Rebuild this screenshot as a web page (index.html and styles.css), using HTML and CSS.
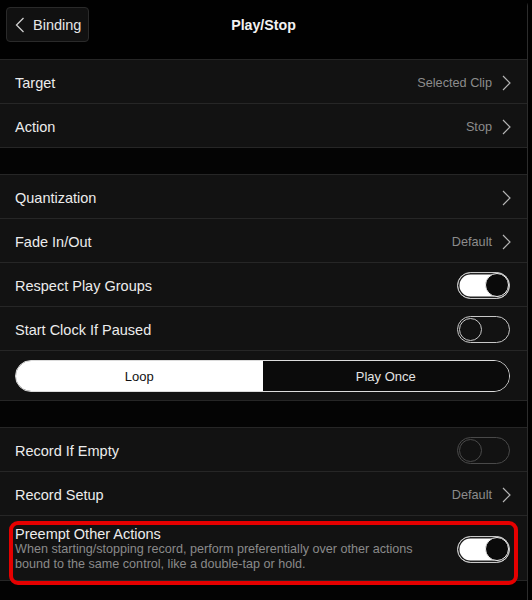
FILE: index.html
```html
<!DOCTYPE html>
<html lang="en">
<head>
    <meta charset="UTF-8">
    <title>Play/Stop</title>
    <link rel="stylesheet" href="styles.css">
</head>
<body>
    <div class="screen">
        <header class="topbar">
            <a class="back-btn" href="#">
                <svg width="10" height="16" viewBox="0 0 10 16"><path d="M8.5 1 L1.5 8 L8.5 15" fill="none" stroke="#cfcfcf" stroke-width="1.3"/></svg>
                <span>Binding</span>
            </a>
            <h1 class="title">Play/Stop</h1>
            <span></span>
        </header>

        <section class="group">
            <div class="row">
                <span class="label">Target</span>
                <span class="value">Selected Clip</span>
                <svg class="chev" width="9" height="16" viewBox="0 0 9 16"><path d="M1 1 L8 8 L1 15" fill="none" stroke="#b5b5b5" stroke-width="1.2"/></svg>
            </div>
            <div class="row">
                <span class="label">Action</span>
                <span class="value">Stop</span>
                <svg class="chev" width="9" height="16" viewBox="0 0 9 16"><path d="M1 1 L8 8 L1 15" fill="none" stroke="#b5b5b5" stroke-width="1.2"/></svg>
            </div>
        </section>

        <div class="gap"></div>

        <section class="group">
            <div class="row">
                <span class="label">Quantization</span>
                <svg class="chev" width="9" height="16" viewBox="0 0 9 16"><path d="M1 1 L8 8 L1 15" fill="none" stroke="#b5b5b5" stroke-width="1.2"/></svg>
            </div>
            <div class="row">
                <span class="label">Fade In/Out</span>
                <span class="value">Default</span>
                <svg class="chev" width="9" height="16" viewBox="0 0 9 16"><path d="M1 1 L8 8 L1 15" fill="none" stroke="#b5b5b5" stroke-width="1.2"/></svg>
            </div>
            <div class="row">
                <span class="label">Respect Play Groups</span>
                <span class="toggle on"><span class="knob"></span></span>
            </div>
            <div class="row">
                <span class="label">Start Clock If Paused</span>
                <span class="toggle"><span class="knob"></span></span>
            </div>
            <div class="row seg-row">
                <div class="segmented">
                    <span class="seg active">Loop</span>
                    <span class="seg">Play Once</span>
                </div>
            </div>
        </section>

        <div class="gap"></div>

        <section class="group">
            <div class="row">
                <span class="label">Record If Empty</span>
                <span class="toggle disabled"><span class="knob"></span></span>
            </div>
            <div class="row">
                <span class="label">Record Setup</span>
                <span class="value">Default</span>
                <svg class="chev" width="9" height="16" viewBox="0 0 9 16"><path d="M1 1 L8 8 L1 15" fill="none" stroke="#b5b5b5" stroke-width="1.2"/></svg>
            </div>
            <div class="row tall">
                <div class="text-block">
                    <span class="label">Preempt Other Actions</span>
                    <p class="desc">When starting/stopping record, perform preferentially over other actions bound to the same control, like a double-tap or hold.</p>
                </div>
                <span class="toggle on"><span class="knob"></span></span>
                <div class="highlight"></div>
            </div>
        </section>
    </div>
</body>
</html>
```

FILE: styles.css
```css
/* Reset */
* {
    margin: 0;
    padding: 0;
    box-sizing: border-box;
    font-family: 'Liberation Sans', Arial, sans-serif;
}

body {
    background: #000;
    color: #ececec;
    width: 532px;
    height: 600px;
    overflow: hidden;
}

.screen {
    width: 528px;
    height: 600px;
    background: #030303;
    border-right: 1px solid #2c2c2c;
    border-top-right-radius: 6px;
}

.topbar {
    display: grid;
    grid-template-columns: 1fr auto 1fr;
    align-items: center;
    height: 59px;
    padding: 0 6px;
    background: #010101;
}

.back-btn {
    justify-self: start;
    display: flex;
    align-items: center;
    gap: 8px;
    height: 35px;
    width: 83px;
    padding: 0 0 0 8px;
    margin-top: -10px;
    background: #111;
    border: 1px solid #2a2a2a;
    border-radius: 4px;
    color: #e6e6e6;
    text-decoration: none;
    font-size: 14.5px;
}

.title {
    font-size: 14.2px;
    font-weight: bold;
    color: #f2f2f2;
    margin-top: -9px;
}

.group {
    border-top: 1px solid #262626;
    border-bottom: 1px solid #262626;
    background: #121212;
}

.row {
    display: flex;
    align-items: center;
    height: 44px;
    padding: 2px 16px 0 15px;
    border-top: 1px solid #262626;
}

.row:first-child {
    border-top: none;
    height: 43px;
}

.label {
    flex: 1;
    font-size: 14.5px;
    color: #ececec;
}

.value {
    font-size: 12.7px;
    color: #8c8c8c;
    margin-right: 10px;
}

.gap {
    height: 26px;
    background: #040404;
}

/* toggles */
.toggle {
    position: relative;
    width: 53px;
    height: 27px;
    border-radius: 14px;
    border: 1.5px solid #c8c8c8;
    margin-right: 1px;
}

.toggle .knob {
    position: absolute;
    top: 0.5px;
    left: 0.5px;
    width: 23px;
    height: 23px;
    border-radius: 50%;
    border: 1.5px solid #c8c8c8;
}

.toggle.on {
    background: #fff;
    box-shadow: inset 0 0 0 1.5px #222;
}

.toggle.on .knob {
    left: auto;
    right: 0;
    top: 0;
    width: 24px;
    height: 24px;
    background: #0a0a0a;
    border: 1.5px solid #f0f0f0;
}

.toggle.disabled {
    opacity: 0.3;
}

/* segmented */
.seg-row {
    height: 50px;
    padding: 9px 17px 8px 15px;
}

.segmented {
    flex: 1;
    display: flex;
    height: 32px;
    border: 1.5px solid #dcdcdc;
    border-radius: 16px;
    overflow: hidden;
}

.seg {
    flex: 1;
    display: flex;
    align-items: center;
    justify-content: center;
    font-size: 13px;
    color: #e4e4e4;
    background: #0b0b0b;
}

.seg.active {
    background: #fff;
    color: #111;
}

/* preempt row */
.row.tall {
    position: relative;
    height: 65px;
    align-items: center;
}

.text-block {
    flex: 1;
}

.text-block .label {
    display: block;
    line-height: 16px;
}

.desc {
    font-size: 12.6px;
    line-height: 15px;
    color: #8a8a8a;
    max-width: 412px;
}

.highlight {
    position: absolute;
    top: 5px;
    left: 9px;
    width: 509px;
    height: 64px;
    border: 4px solid #e50000;
    border-radius: 9px;
    pointer-events: none;
}
```
